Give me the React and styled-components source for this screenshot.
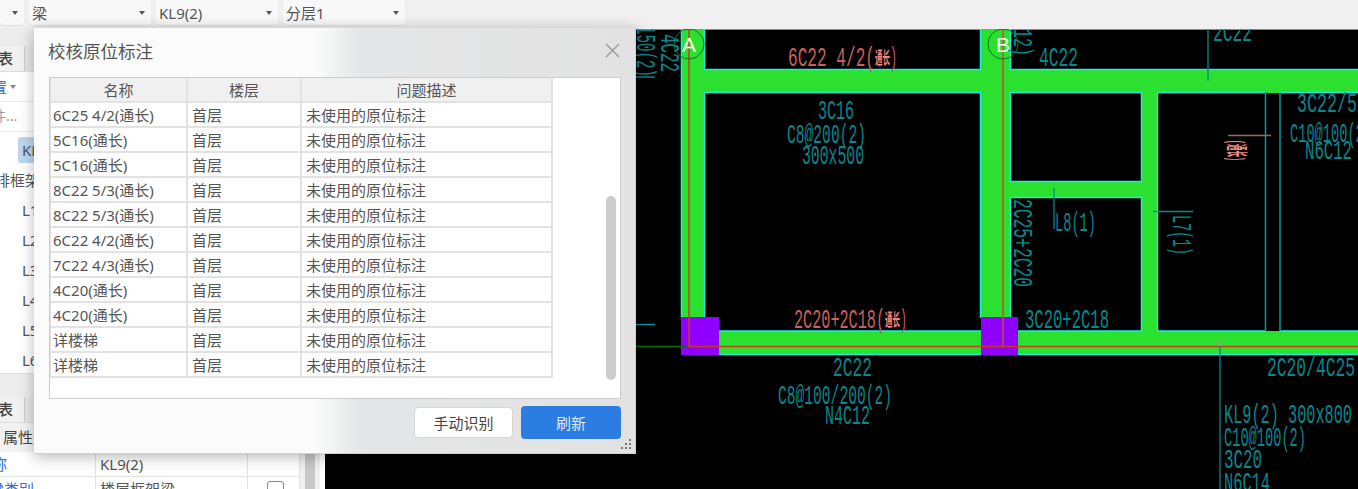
import React from 'react';
import styled, { createGlobalStyle } from 'styled-components';

const UI_FONT = '"Noto Sans", "Noto Sans CJK SC", "Liberation Sans", sans-serif';

const GlobalStyle = createGlobalStyle`
  html, body {
    margin: 0;
    padding: 0;
    background: #f0f0f0;
    font-family: ${UI_FONT};
  }
`;

const Page = styled.div`
  position: relative;
  width: 1358px;
  height: 489px;
  overflow: hidden;
  display: flex;
  flex-direction: column;
`;

/* top selector bar */
const Toolbar = styled.div`
  height: 29px;
  flex: none;
  display: flex;
  gap: 5px;
  background: #f0f0f0;
`;

const Select = styled.div`
  width: ${props => props.$width}px;
  height: 25px;
  box-sizing: border-box;
  padding: 0 6px 0 3px;
  display: flex;
  align-items: center;
  justify-content: space-between;
  background: #f8f8f8;
  border-radius: 0 0 4px 4px;
  box-shadow: 0 1px 1px rgba(0, 0, 0, 0.08);
  font-size: 15px;
  color: #555;
`;

const Caret = styled.span`
  width: 0;
  height: 0;
  border-left: 3.5px solid transparent;
  border-right: 3.5px solid transparent;
  border-top: 4px solid ${props => props.$color || '#555'};
`;

const Main = styled.div`
  flex: 1;
  min-height: 0;
  display: flex;
`;

/* left hand panels */
const SidePanel = styled.div`
  width: 325px;
  flex: none;
  display: flex;
  flex-direction: column;
  background: #fff;
  font-size: 15px;
  color: #555;
`;

const Band = styled.div`
  height: ${props => props.$height}px;
  flex: none;
  background: #ececec;
  border-top: ${props => (props.$lined ? '1px solid #ddd' : 'none')};
  box-sizing: border-box;
`;

const TabBar = styled.div`
  height: 26px;
  flex: none;
  display: flex;
  background: #e6e6e6;
  border-bottom: 1px solid #ddd;
  box-sizing: border-box;
`;

const Tab = styled.div`
  width: 24px;
  background: #f1f1f1;
  border-right: 1px solid #ccc;
  font-weight: 500;
  line-height: 25px;
  color: #444;
`;

const ActionRow = styled.div`
  height: 30px;
  flex: none;
  display: flex;
  align-items: center;
  gap: 3px;
  box-sizing: border-box;
  border-bottom: 1px solid #e8e8e8;
  color: #2f6fd6;
`;

// the panel is scrolled sideways, so labels start left of its edge
const ClippedText = styled.span`
  margin-left: ${props => props.$shift}px;
  white-space: nowrap;
`;

const SearchRow = styled.div`
  height: 30px;
  flex: none;
  box-sizing: border-box;
  border-bottom: 1px solid #e8e8e8;
  line-height: 28px;
  font-size: 14px;
  color: #999;
`;

const TreeList = styled.div`
  flex: none;
  height: 241px;
  padding-top: 3px;
  box-sizing: border-box;
`;

const TreeItem = styled.div`
  height: 30px;
  box-sizing: border-box;
  margin-left: ${props => props.$indent}px;
  padding-left: 4px;
  border-top: 2px solid transparent;
  border-bottom: 2px solid transparent;
  background-clip: padding-box;
  line-height: 26px;
  white-space: nowrap;
  background-color: ${props => (props.$active ? '#bcd6f0' : 'transparent')};
  border-radius: 4px;
`;

const AttrHead = styled.div`
  height: 29px;
  flex: none;
  padding-left: 3px;
  background: #f2f2f2;
  line-height: 28px;
  box-sizing: border-box;
  color: #444;
`;

const AttrArea = styled.div`
  flex: 1;
  min-height: 0;
  display: flex;
  overflow: hidden;
`;

const AttrGrid = styled.div`
  width: 300px;
  flex: none;
`;

const AttrRow = styled.div`
  height: 25px;
  display: grid;
  grid-template-columns: 96px 152px 52px;
  box-sizing: border-box;
  border-bottom: 1px solid #e2e2e2;
`;

const AttrCell = styled.div`
  padding-left: ${props => (props.$name ? 0 : 4)}px;
  border-right: 1px solid #e2e2e2;
  line-height: 24px;
  white-space: nowrap;
  color: ${props => (props.$name ? '#2f6fd6' : '#555')};
  display: flex;
  justify-content: ${props => (props.$center ? 'center' : 'flex-start')};
`;

const CheckBox = styled.span`
  width: 17px;
  height: 17px;
  margin-top: 4px;
  box-sizing: border-box;
  background: #fff;
  border: 1px solid #888;
  border-radius: 3px;
`;

const SideScroll = styled.div`
  width: 20px;
  flex: none;
  display: flex;
  justify-content: center;
  background: #f0f0f0;
`;

const SideThumb = styled.div`
  width: 10px;
  background: #c8c8c8;
`;

/* drawing area */
const CanvasArea = styled.div`
  flex: 1;
  min-width: 0;
  background: #000;
`;

const Drawing = styled.svg`
  display: block;
  width: 1033px;
  height: 460px;
`;

const CadLabel = styled.text`
  font-family: "Liberation Mono", "Noto Sans CJK SC", monospace;
  font-size: ${props => props.$size || 28}px;
  font-weight: ${props => (props.$bold ? 700 : 400)};
  fill: ${props => props.$color || '#0a868c'};
`;

const AxisLetter = styled.text`
  font-family: "Liberation Sans", sans-serif;
  font-size: 21px;
  text-anchor: middle;
  fill: #f2fff2;
`;

/* check dialog */
const Dialog = styled.div`
  position: absolute;
  left: 34px;
  top: 27px;
  width: 602px;
  height: 427px;
  box-sizing: border-box;
  padding: 0 14px;
  display: flex;
  flex-direction: column;
  border: 1px solid #cfcfcf;
  border-left: 0;
  border-top-color: #d8d8d8;
  background: linear-gradient(90deg, #fbfbfb 0%, #fbfbfb 47%, #e5e6e7 54%, #e2e2e2 100%);
  box-shadow: 0 3px 14px rgba(0, 0, 0, 0.28);
`;

const TitleBar = styled.div`
  height: 49px;
  flex: none;
  box-sizing: border-box;
  padding-bottom: 4px;
  display: flex;
  align-items: center;
  justify-content: space-between;
  font-size: 17.5px;
  color: #555;
`;

const CloseIcon = styled.svg`
  display: block;
  margin-right: 1px;
`;

const TableFrame = styled.div`
  position: relative;
  margin-left: 1px;
  height: 322px;
  flex: none;
  box-sizing: border-box;
  border: 1px solid #ccc;
  background: #fff;
`;

const TableRow = styled.div`
  width: 503px;
  height: 25px;
  display: grid;
  grid-template-columns: 137px 114px 251px;
  box-sizing: border-box;
  background: ${props => (props.$head ? '#f0f0f0' : '#fff')};
  border-bottom: 2px solid #e2e2e2;
  border-left: 1px solid #e2e2e2;
  font-size: 15px;
  color: #555;
`;

const TableCell = styled.div`
  padding-left: ${props => (props.$head ? 0 : 4)}px;
  text-align: ${props => (props.$head ? 'center' : 'left')};
  border-right: 2px solid #e2e2e2;
  line-height: 25px;
  white-space: nowrap;

  &:first-child {
    padding-left: ${props => (props.$head ? 0 : 2)}px;
  }
`;

const ScrollThumb = styled.div`
  position: absolute;
  right: 4px;
  top: 118px;
  width: 10px;
  height: 184px;
  border-radius: 5px;
  background: #cdcdcd;
`;

const Footer = styled.div`
  flex: 1;
  display: flex;
  justify-content: flex-end;
  align-items: flex-start;
  gap: 8px;
  padding-top: 7px;
`;

const Button = styled.button`
  width: ${props => (props.$primary ? 100 : 99)}px;
  height: ${props => (props.$primary ? 33 : 31)}px;
  margin-top: ${props => (props.$primary ? 0 : 1)}px;
  padding: 0;
  box-sizing: border-box;
  border: ${props => (props.$primary ? 'none' : '1px solid #d6d6d6')};
  border-radius: 4px;
  background: ${props => (props.$primary ? '#2b7de1' : '#fff')};
  color: ${props => (props.$primary ? '#dcebfc' : '#444')};
  font-family: inherit;
  font-size: 15px;
`;

const Grip = styled.svg`
  position: absolute;
  right: 3px;
  bottom: 3px;
`;

const selects = [
  { width: 24, label: '' },
  { width: 122, label: '梁' },
  { width: 122, label: 'KL9(2)' },
  { width: 122, label: '分层1' },
];

const rows = [
  '6C25 4/2(通长)',
  '5C16(通长)',
  '5C16(通长)',
  '8C22 5/3(通长)',
  '8C22 5/3(通长)',
  '6C22 4/2(通长)',
  '7C22 4/3(通长)',
  '4C20(通长)',
  '4C20(通长)',
  '详楼梯',
  '详楼梯',
];

const treeItems = ['L1', 'L2', 'L3', 'L4', 'L5', 'L6'];

const NOTE_RED = '#c8625c';
const NOTE_PINK = '#ee8a84';

// x, baseline y, text length, optional colour
const labels = [
  { x: 818, y: 119, len: 36, text: '3C16' },
  { x: 787, y: 143, len: 79, text: 'C8@200(2)' },
  { x: 802, y: 164, len: 62, text: '300x500' },
  { x: 1039, y: 66, len: 39, text: '4C22' },
  { x: 1213, y: 41, len: 39, text: '2C22' },
  { x: 1297, y: 112, len: 70, text: '3C22/50' },
  { x: 1290, y: 142, len: 82, text: 'C10@100(2)' },
  { x: 1305, y: 159, len: 47, text: 'N6C12' },
  { x: 1055, y: 231, len: 41, text: 'L8(1)' },
  { x: 1025, y: 328, len: 84, text: '3C20+2C18' },
  { x: 833, y: 376, len: 39, text: '2C22' },
  { x: 778, y: 404, len: 114, text: 'C8@100/200(2)' },
  { x: 825, y: 424, len: 45, text: 'N4C12' },
  { x: 1267, y: 376, len: 88, text: '2C20/4C25' },
  { x: 1224, y: 423, len: 128, text: 'KL9(2) 300x800' },
  { x: 1224, y: 446, len: 82, text: 'C10@100(2)' },
  { x: 1224, y: 468, len: 38, text: '3C20' },
  { x: 1224, y: 491, len: 46, text: 'N6C14' },
  { x: 788, y: 66, len: 87, text: '6C22 4/2(', color: NOTE_RED },
  { x: 875, y: 64, len: 15, text: '通长', color: NOTE_PINK, size: 17, bold: true },
  { x: 890, y: 66, len: 7, text: ')', color: NOTE_RED },
  { x: 794, y: 328, len: 91, text: '2C20+2C18(', color: NOTE_RED },
  { x: 885, y: 326, len: 15, text: '通长', color: NOTE_PINK, size: 17, bold: true },
  { x: 900, y: 328, len: 7, text: ')', color: NOTE_RED },
];

// read top to bottom, x is the baseline side of the letters
const sideLabels = [
  { x: 637, y: 26, len: 51, text: '150(2)' },
  { x: 661, y: 34, len: 38, text: '4C22' },
  { x: 1014, y: 20, len: 36, text: '(12)' },
  { x: 1014, y: 199, len: 88, text: '2C25+2C20' },
  { x: 1173, y: 215, len: 40, text: 'L7(1)' },
  { x: 1229, y: 140, len: 21, text: '(通长)', color: NOTE_PINK, size: 22, bold: true },
];

const GREEN = '#2ce02f';
const EDGE = '#1aece6';
const THIN_EDGE = '#0b9aa0';

function Beam({ x, y, w, h }) {
  return <rect x={x} y={y} width={w} height={h} fill={GREEN} />;
}

function Edge({ x1, y1, x2, y2, color }) {
  return <line x1={x1} y1={y1} x2={x2} y2={y2} stroke={color || EDGE} strokeWidth="1.5" />;
}

function CadDrawing() {
  return (
    <Drawing viewBox="325 29 1033 460">
      <line x1="325" y1="29.5" x2="1358" y2="29.5" stroke="#8a8a8a" />

      <Beam x={681} y={29} w={23} h={290} />
      <Beam x={704} y={70} w={654} h={23} />
      <Beam x={981} y={29} w={30} h={290} />
      <Beam x={719} y={331} w={639} h={24} />
      <Beam x={1011} y={182} w={131} h={15} />
      <Beam x={1142} y={93} w={15} h={238} />

      <Edge x1={681.5} y1={29} x2={681.5} y2={318} />
      <Edge x1={704.5} y1={29} x2={704.5} y2={70} />
      <Edge x1={704.5} y1={93} x2={704.5} y2={318} />
      <Edge x1={704} y1={69.5} x2={981} y2={69.5} />
      <Edge x1={704} y1={92.5} x2={981} y2={92.5} />
      <Edge x1={980.5} y1={29} x2={980.5} y2={70} />
      <Edge x1={980.5} y1={92} x2={980.5} y2={318} />
      <Edge x1={1010.5} y1={29} x2={1010.5} y2={70} />
      <Edge x1={1010.5} y1={92} x2={1010.5} y2={182} />
      <Edge x1={1010.5} y1={197} x2={1010.5} y2={318} />
      <Edge x1={1011} y1={69.5} x2={1358} y2={69.5} />
      <Edge x1={1011} y1={92.5} x2={1142} y2={92.5} />
      <Edge x1={1157} y1={92.5} x2={1265} y2={92.5} />
      <Edge x1={1280} y1={92.5} x2={1358} y2={92.5} />
      <Edge x1={1011} y1={181.5} x2={1142} y2={181.5} />
      <Edge x1={1011} y1={197.5} x2={1142} y2={197.5} />
      <Edge x1={1141.5} y1={93} x2={1141.5} y2={182} />
      <Edge x1={1141.5} y1={197} x2={1141.5} y2={331} />
      <Edge x1={1157.5} y1={93} x2={1157.5} y2={331} />
      <Edge x1={719} y1={331} x2={981} y2={331} />
      <Edge x1={719} y1={354.5} x2={981} y2={354.5} />
      <Edge x1={1018} y1={331} x2={1142} y2={331} />
      <Edge x1={1157} y1={331} x2={1265} y2={331} />
      <Edge x1={1280} y1={331} x2={1358} y2={331} />
      <Edge x1={1018} y1={354.5} x2={1358} y2={354.5} />
      <Edge x1={1265.5} y1={92} x2={1265.5} y2={331} color={THIN_EDGE} />
      <Edge x1={1280} y1={92} x2={1280} y2={331} color={THIN_EDGE} />

      <rect x={681} y={317} width={38} height={38} fill="#8f00ff" />
      <rect x={981} y={317} width={37} height={38} fill="#8f00ff" />

      <line x1="636" y1="346.5" x2="689" y2="346.5" stroke="#0b6b12" strokeWidth="1.5" />
      <line x1="689" y1="346.5" x2="1358" y2="346.5" stroke="#c83c1e" strokeWidth="1.5" />
      <line x1="689" y1="29" x2="689" y2="347" stroke="#c83c1e" strokeWidth="1.5" />
      <line x1="1003" y1="29" x2="1003" y2="347" stroke="#c0502a" strokeWidth="1.5" />

      <circle cx="689" cy="44" r="15" fill="none" stroke="#0c7d12" />
      <circle cx="1003" cy="44" r="15" fill="none" stroke="#0c7d12" />
      <AxisLetter x="689" y="52">A</AxisLetter>
      <AxisLetter x="1003" y="52">B</AxisLetter>

      {/* leaders */}
      <line x1="636" y1="77" x2="655" y2="77" stroke={THIN_EDGE} strokeWidth="1.3" />
      <line x1="636" y1="324.5" x2="655" y2="324.5" stroke={THIN_EDGE} strokeWidth="1.3" />
      <line x1="1208" y1="29" x2="1208" y2="81" stroke="#0a868c" strokeWidth="1.3" />
      <line x1="1054" y1="188" x2="1054" y2="229" stroke="#0a868c" strokeWidth="1.3" />
      <line x1="1153" y1="211.5" x2="1193" y2="211.5" stroke="#0a868c" strokeWidth="1.3" />
      <line x1="1228" y1="135.5" x2="1271" y2="135.5" stroke="#b0605a" strokeWidth="1.3" />
      <line x1="1220" y1="346" x2="1220" y2="489" stroke="#0a868c" strokeWidth="1.3" />
      <circle cx="1220" cy="343" r="2.2" fill="none" stroke="#b09a80" />

      {labels.map(label => (
        <CadLabel
          key={label.text + label.x}
          x={label.x}
          y={label.y}
          $color={label.color}
          $size={label.size}
          $bold={label.bold}
          textLength={label.len}
          lengthAdjust="spacingAndGlyphs"
        >
          {label.text}
        </CadLabel>
      ))}

      {sideLabels.map(label => (
        <CadLabel
          key={label.text + label.y}
          transform={`translate(${label.x} ${label.y}) rotate(90)`}
          $color={label.color}
          $size={label.size}
          $bold={label.bold}
          textLength={label.len}
          lengthAdjust="spacingAndGlyphs"
        >
          {label.text}
        </CadLabel>
      ))}
    </Drawing>
  );
}

function CheckDialog() {
  return (
    <Dialog>
      <TitleBar>
        校核原位标注
        <CloseIcon width="15" height="15" viewBox="0 0 15 15">
          <path d="M1 1L14 14M14 1L1 14" stroke="#999" strokeWidth="1.4" fill="none" />
        </CloseIcon>
      </TitleBar>
      <TableFrame>
        <TableRow $head>
          <TableCell $head>名称</TableCell>
          <TableCell $head>楼层</TableCell>
          <TableCell $head>问题描述</TableCell>
        </TableRow>
        {rows.map((name, index) => (
          <TableRow key={index}>
            <TableCell>{name}</TableCell>
            <TableCell>首层</TableCell>
            <TableCell>未使用的原位标注</TableCell>
          </TableRow>
        ))}
        <ScrollThumb />
      </TableFrame>
      <Footer>
        <Button>手动识别</Button>
        <Button $primary>刷新</Button>
      </Footer>
      <Grip width="11" height="11" viewBox="0 0 11 11" fill="#777">
        <rect x="8" y="0" width="2" height="2" />
        <rect x="4" y="4" width="2" height="2" />
        <rect x="8" y="4" width="2" height="2" />
        <rect x="0" y="8" width="2" height="2" />
        <rect x="4" y="8" width="2" height="2" />
        <rect x="8" y="8" width="2" height="2" />
      </Grip>
    </Dialog>
  );
}

function App() {
  return (
    <Page>
      <GlobalStyle />
      <Toolbar>
        {selects.map((select, index) => (
          <Select key={index} $width={select.width}>
            <span>{select.label}</span>
            <Caret />
          </Select>
        ))}
      </Toolbar>
      <Main>
        <SidePanel>
          <Band $height={17} />
          <TabBar>
            <Tab><ClippedText $shift={-2}>表</ClippedText></Tab>
          </TabBar>
          <ActionRow>
            <ClippedText $shift={-23}>布置</ClippedText>
            <Caret $color="#888" />
          </ActionRow>
          <SearchRow><ClippedText $shift={-8}>件...</ClippedText></SearchRow>
          <TreeList>
            <TreeItem $indent={18} $active>KL9(2)</TreeItem>
            <TreeItem $indent={-9}>排框架梁</TreeItem>
            {treeItems.map(item => (
              <TreeItem key={item} $indent={18}>{item}</TreeItem>
            ))}
          </TreeList>
          <Band $height={24} $lined />
          <TabBar>
            <Tab><ClippedText $shift={-2}>表</ClippedText></Tab>
          </TabBar>
          <AttrHead>属性名称</AttrHead>
          <AttrArea>
            <AttrGrid>
              <AttrRow>
                <AttrCell $name><ClippedText $shift={-23}>名称</ClippedText></AttrCell>
                <AttrCell>KL9(2)</AttrCell>
                <AttrCell />
              </AttrRow>
              <AttrRow>
                <AttrCell $name><ClippedText $shift={-11}>梁类别</ClippedText></AttrCell>
                <AttrCell>楼层框架梁</AttrCell>
                <AttrCell $center><CheckBox /></AttrCell>
              </AttrRow>
            </AttrGrid>
            <SideScroll>
              <SideThumb />
            </SideScroll>
          </AttrArea>
        </SidePanel>
        <CanvasArea>
          <CadDrawing />
        </CanvasArea>
      </Main>
      <CheckDialog />
    </Page>
  );
}

export default App;
